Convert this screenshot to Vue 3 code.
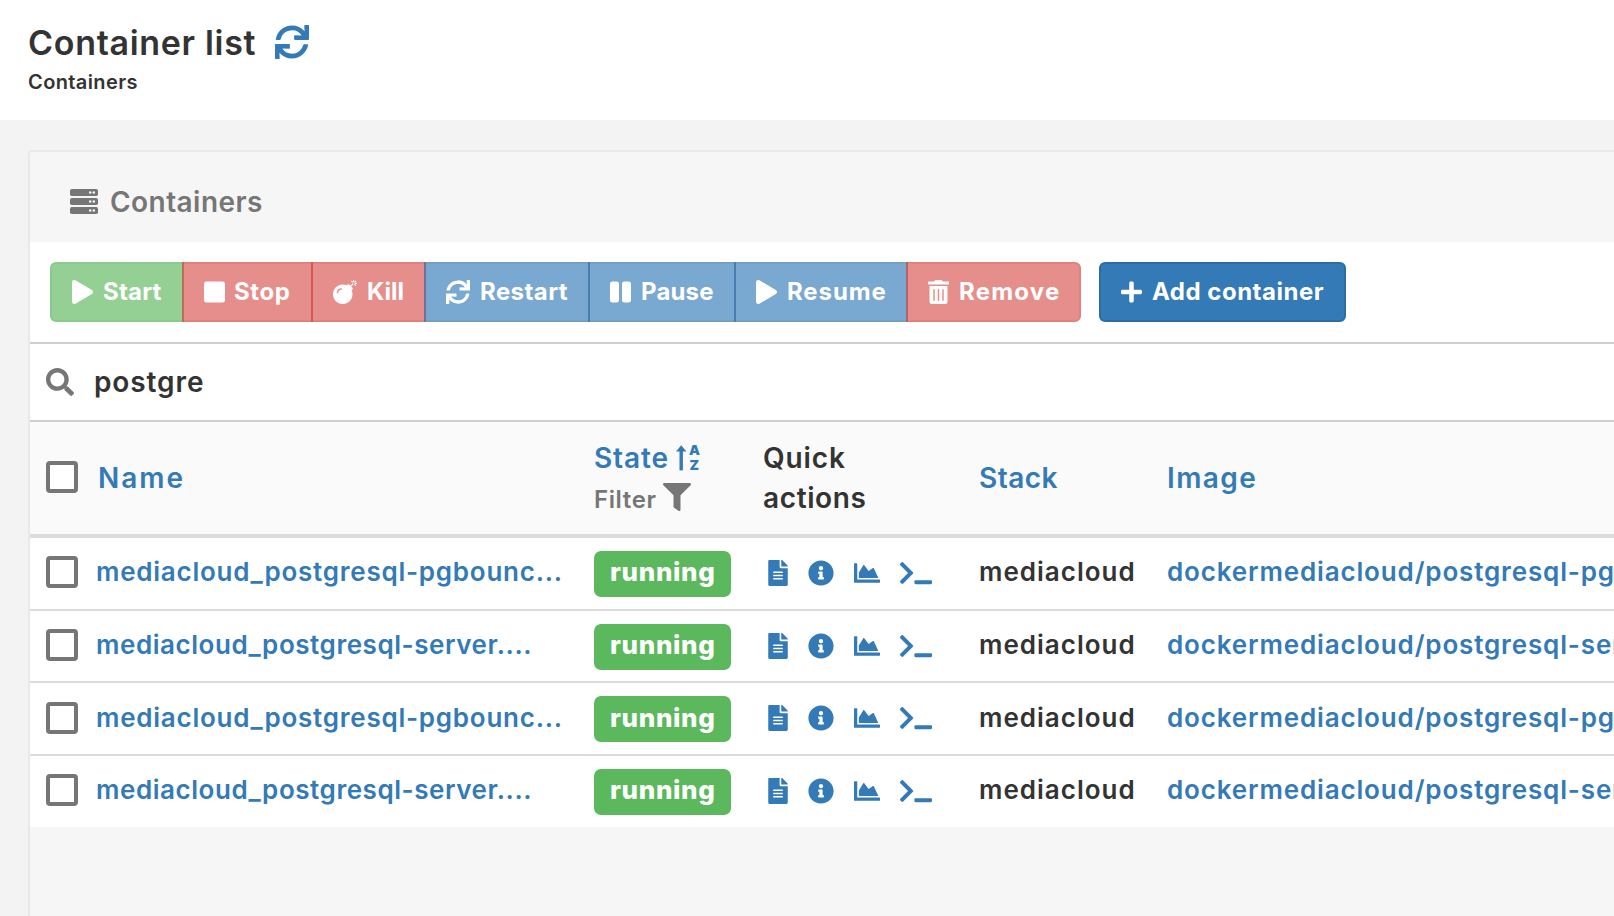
<script setup>
const icons = {
  sync: { box: '0 0 512 512', d: 'M440.65 12.57l4 82.77A247.16 247.16 0 0 0 255.83 8C134.73 8 33.91 94.92 12.29 209.82A12 12 0 0 0 24.09 224h49.05a12 12 0 0 0 11.67-9.26 175.91 175.91 0 0 1 317-56.94l-101.46-4.86a12 12 0 0 0-12.57 12v47.41a12 12 0 0 0 12 12H500a12 12 0 0 0 12-12V12a12 12 0 0 0-12-12h-47.37a12 12 0 0 0-11.98 12.57zM255.83 432a175.61 175.61 0 0 1-146-77.8l101.8 4.87a12 12 0 0 0 12.57-12v-47.4a12 12 0 0 0-12-12H12a12 12 0 0 0-12 12V500a12 12 0 0 0 12 12h47.35a12 12 0 0 0 12-12.6l-4.15-82.57A247.17 247.17 0 0 0 255.83 504c121.11 0 221.93-86.92 243.55-201.82a12 12 0 0 0-11.8-14.18h-49.05a12 12 0 0 0-11.67 9.26A175.86 175.86 0 0 1 255.83 432z' },
  play: { box: '0 0 448 512', d: 'M424.4 214.7L72.4 6.6C43.8-10.3 0 6.1 0 47.9V464c0 37.5 40.7 60.1 72.4 41.3l352-208c31.4-18.5 31.5-64.1 0-82.6z' },
  stop: { box: '0 0 448 512', d: 'M400 32H48C21.5 32 0 53.5 0 80v352c0 26.5 21.5 48 48 48h352c26.5 0 48-21.5 48-48V80c0-26.5-21.5-48-48-48z' },
  bomb: { box: '0 0 512 512', d: 'M440.5 88.5l-52 52L415 167c9.4 9.4 9.4 24.6 0 33.9l-17.4 17.4c11.8 26.1 18.4 55.1 18.4 85.6 0 114.9-93.1 208-208 208S0 418.9 0 304 93.1 96 208 96c30.5 0 59.5 6.6 85.6 18.4L311 97c9.4-9.4 24.6-9.4 33.9 0l26.5 26.5 52-52 17.1 17zM500 60h-24c-6.6 0-12 5.4-12 12s5.4 12 12 12h24c6.6 0 12-5.4 12-12s-5.4-12-12-12zM440 0c-6.6 0-12 5.4-12 12v24c0 6.6 5.4 12 12 12s12-5.4 12-12V12c0-6.6-5.4-12-12-12zm33.9 55l17-17c4.7-4.7 4.7-12.3 0-17-4.7-4.7-12.3-4.7-17 0l-17 17c-4.7 4.7-4.7 12.3 0 17 4.8 4.7 12.4 4.7 17 0zm-67.8 0c4.7 4.7 12.3 4.7 17 0 4.7-4.7 4.7-12.3 0-17l-17-17c-4.7-4.7-12.3-4.7-17 0-4.7 4.7-4.7 12.3 0 17l17 17zm67.8 34c-4.7-4.7-12.3-4.7-17 0-4.7 4.7-4.7 12.3 0 17l17 17c4.7 4.7 12.3 4.7 17 0 4.7-4.7 4.7-12.3 0-17l-17-17zM112 272c0-35.3 28.7-64 64-64 8.8 0 16-7.2 16-16s-7.2-16-16-16c-52.9 0-96 43.1-96 96 0 8.8 7.2 16 16 16s16-7.2 16-16z' },
  pause: { box: '0 0 448 512', d: 'M144 479H48c-26.5 0-48-21.5-48-48V79c0-26.5 21.5-48 48-48h96c26.5 0 48 21.5 48 48v352c0 26.5-21.5 48-48 48zm304-48V79c0-26.5-21.5-48-48-48h-96c-26.5 0-48 21.5-48 48v352c0 26.5 21.5 48 48 48h96c26.5 0 48-21.5 48-48z' },
  trash: { box: '0 0 448 512', d: 'M32 464a48 48 0 0 0 48 48h288a48 48 0 0 0 48-48V128H32zm272-256a16 16 0 0 1 32 0v224a16 16 0 0 1-32 0zm-96 0a16 16 0 0 1 32 0v224a16 16 0 0 1-32 0zm-96 0a16 16 0 0 1 32 0v224a16 16 0 0 1-32 0zM432 32H312l-9.4-18.7A24 24 0 0 0 281.1 0H166.8a23.72 23.72 0 0 0-21.4 13.3L136 32H16A16 16 0 0 0 0 48v32a16 16 0 0 0 16 16h416a16 16 0 0 0 16-16V48a16 16 0 0 0-16-16z' },
  plus: { box: '0 0 448 512', d: 'M416 208H272V64c0-17.67-14.33-32-32-32h-32c-17.67 0-32 14.33-32 32v144H32c-17.67 0-32 14.33-32 32v32c0 17.67 14.33 32 32 32h144v144c0 17.67 14.33 32 32 32h32c17.67 0 32-14.33 32-32V304h144c17.67 0 32-14.33 32-32v-32c0-17.67-14.33-32-32-32z' },
}

const actions = [
  { label: 'Start', icon: 'play', tone: 'green', width: 134, track: 0.2 },
  { label: 'Stop', icon: 'stop', tone: 'red', width: 131, track: 0.6 },
  { label: 'Kill', icon: 'bomb', tone: 'red', width: 115, track: 0 },
  { label: 'Restart', icon: 'sync', tone: 'blue', width: 166, track: 0.42 },
  { label: 'Pause', icon: 'pause', tone: 'blue', width: 148, track: 0.15 },
  { label: 'Resume', icon: 'play', tone: 'blue', width: 174, track: 0.9 },
  { label: 'Remove', icon: 'trash', tone: 'red', width: 175, track: 1.2 },
]

const rows = [
  { name: 'mediacloud_postgresql-pgbounc...', track: 0.76, image: 'dockermediacloud/postgresql-pgbouncer', height: 71 },
  { name: 'mediacloud_postgresql-server....', track: 0.55, image: 'dockermediacloud/postgresql-server', height: 72 },
  { name: 'mediacloud_postgresql-pgbounc...', track: 0.76, image: 'dockermediacloud/postgresql-pgbouncer', height: 73 },
  { name: 'mediacloud_postgresql-server....', track: 0.55, image: 'dockermediacloud/postgresql-server', height: 73 },
]
</script>

<template>
  <div class="page">
    <header class="page-head">
      <div class="title-line">
        <h1 class="title">Container list</h1>
        <svg class="refresh" :viewBox="icons.sync.box"><path :d="icons.sync.d" /></svg>
      </div>
      <div class="crumb">Containers</div>
    </header>

    <main class="panel">
      <div class="panel-head">
        <svg class="server" viewBox="0 0 28 25">
          <g v-for="y in [0, 9, 18]" :key="y">
            <rect x="0" :y="y" width="28" height="7" rx="1.8" fill="#767676" />
            <circle cx="20.2" :cy="y + 3.5" r="1.25" fill="#f6f6f6" />
            <circle cx="23.8" :cy="y + 3.5" r="1.25" fill="#f6f6f6" />
          </g>
        </svg>
        <span class="panel-title">Containers</span>
      </div>

      <div class="toolbar">
        <div class="group">
          <button v-for="a in actions" :key="a.label" class="btn faded" :class="a.tone" :style="{ width: a.width + 'px', letterSpacing: a.track + 'px' }">
            <svg class="btn-icon" :class="a.icon" :viewBox="icons[a.icon].box"><path :d="icons[a.icon].d" /></svg>
            <span class="label">{{ a.label }}</span>
          </button>
        </div>
        <button class="btn blue add">
          <svg class="btn-icon" :viewBox="icons.plus.box"><path :d="icons.plus.d" /></svg>
          <span class="label">Add container</span>
        </button>
      </div>

      <div class="search">
        <svg class="lens" viewBox="0 0 512 512"><path d="M505 442.7L405.3 343c-4.5-4.5-10.6-7-17-7H372c27.6-35.3 44-79.7 44-128C416 93.1 322.9 0 208 0S0 93.1 0 208s93.1 208 208 208c48.3 0 92.7-16.4 128-44v16.3c0 6.4 2.5 12.5 7 17l99.7 99.7c9.4 9.4 24.6 9.4 33.9 0l28.3-28.3c9.4-9.4 9.4-24.6.1-34zM208 336c-70.7 0-128-57.2-128-128 0-70.7 57.2-128 128-128 70.7 0 128 57.2 128 128 0 70.7-57.2 128-128 128z" /></svg>
        <span>postgre</span>
      </div>

      <div class="grid head">
        <i class="check"></i>
        <span class="link h-name">Name</span>
        <div>
          <div class="line link"><span class="h-state">State</span>
            <svg class="sort" viewBox="0 0 24 26">
              <path d="M5.2 25.4V4.5" fill="none" stroke="#337ab7" stroke-width="3.4" />
              <path d="M0 6.4L5.2 .2l5.2 6.2z" />
              <text x="13" y="10.4" font-size="13.8" font-weight="900">A</text>
              <text x="13.4" y="25.4" font-size="13.8" font-weight="900">Z</text>
            </svg>
          </div>
          <div class="line filter"><span class="h-filter">Filter</span>
            <svg class="funnel" viewBox="0 0 512 512"><path d="M487.976 0H24.028C2.71 0-8.047 25.866 7.058 40.971L192 225.941V432c0 7.831 3.821 15.17 10.237 19.662l80 55.98C298.02 518.69 320 507.493 320 487.98V225.941l184.947-184.97C520.021 25.896 509.338 0 487.976 0z" /></svg>
          </div>
        </div>
        <div><div class="line h-quick">Quick</div><div class="line h-actions">actions</div></div>
        <span class="link h-stack">Stack</span>
        <span class="link h-image">Image</span>
      </div>

      <div v-for="(r, i) in rows" :key="i" class="grid row" :style="{ height: r.height + 'px' }">
        <i class="check"></i>
        <span class="link cell" :style="{ letterSpacing: r.track + 'px' }">{{ r.name }}</span>
        <div class="badge"><span>running</span></div>
        <div class="quick">
          <svg class="q-file" viewBox="0 0 384 512"><path d="M224 136V0H24C10.7 0 0 10.7 0 24v464c0 13.3 10.7 24 24 24h336c13.3 0 24-10.7 24-24V160H248c-13.2 0-24-10.8-24-24zm64 236c0 6.6-5.4 12-12 12H108c-6.6 0-12-5.4-12-12v-8c0-6.6 5.4-12 12-12h168c6.6 0 12 5.4 12 12v8zm0-64c0 6.6-5.4 12-12 12H108c-6.6 0-12-5.4-12-12v-8c0-6.6 5.4-12 12-12h168c6.6 0 12 5.4 12 12v8zm0-72v8c0 6.6-5.4 12-12 12H108c-6.6 0-12-5.4-12-12v-8c0-6.6 5.4-12 12-12h168c6.6 0 12 5.4 12 12zm96-114.1v6.1H256V0h6.1c6.4 0 12.5 2.5 17 7l97.9 98c4.5 4.5 7 10.6 7 16.9z" /></svg>
          <svg class="q-info" viewBox="0 0 512 512"><path d="M256 8C119.043 8 8 119.083 8 256c0 136.997 111.043 248 248 248s248-111.003 248-248C504 119.083 392.957 8 256 8zm0 110c23.196 0 42 18.804 42 42s-18.804 42-42 42-42-18.804-42-42 18.804-42 42-42zm56 254c0 6.627-5.373 12-12 12h-88c-6.627 0-12-5.373-12-12v-24c0-6.627 5.373-12 12-12h12v-64h-12c-6.627 0-12-5.373-12-12v-24c0-6.627 5.373-12 12-12h64c6.627 0 12 5.373 12 12v100h12c6.627 0 12 5.373 12 12v24z" /></svg>
          <svg class="q-chart" viewBox="0 0 512 512"><path d="M500 384c6.6 0 12 5.4 12 12v40c0 6.6-5.4 12-12 12H12c-6.6 0-12-5.4-12-12V76c0-6.6 5.4-12 12-12h40c6.6 0 12 5.4 12 12v308h436zM372.7 159.5L288 216l-85.3-113.7c-5.1-6.8-15.5-6.3-19.9 1L96 248v104h384l-89.9-187.8c-3.2-6.5-11.4-8.7-17.4-4.7z" /></svg>
          <svg class="q-term" viewBox="0 0 640 512"><path d="M257.981 272.971L63.638 467.314c-9.373 9.373-24.569 9.373-33.941 0L7.029 444.647c-9.357-9.357-9.375-24.522-.04-33.901L161.011 256 6.99 101.255c-9.335-9.379-9.317-24.544.04-33.901l22.667-22.667c9.373-9.373 24.569-9.373 33.941 0L257.981 239.03c9.373 9.372 9.373 24.568 0 33.941zM640 456v-32c0-13.255-10.745-24-24-24H312c-13.255 0-24 10.745-24 24v32c0 13.255 10.745 24 24 24h304c13.255 0 24-10.745 24-24z" /></svg>
        </div>
        <span class="cell stack">mediacloud</span>
        <span class="link cell image">{{ r.image }}</span>
      </div>
    </main>
  </div>
</template>

<style>
body { margin: 0; }
</style>

<style scoped>
.page { width: 1614px; height: 916px; overflow: hidden; display: flex; flex-direction: column; background: #f3f3f3; color: #333; font-family: Inter, "Noto Sans", sans-serif; font-weight: 600; }
.page * { box-sizing: border-box; }
.page-head { height: 120px; flex: none; background: #fff; padding: 22px 0 0 28px; }
.title-line { display: flex; gap: 20px; height: 40px; }
.title { margin: 0; padding-top: 1px; font-size: 34px; line-height: 40px; font-weight: 600; width: 227px; white-space: nowrap; letter-spacing: 0.69px; }
.refresh { width: 34px; height: 34px; margin-top: 3px; fill: #337ab7; }
.crumb { font-size: 20px; line-height: 24px; margin-top: 8px; letter-spacing: 0.39px; }
.panel { margin: 30px 0 0 28px; flex: 1; border: 2px solid #e9e9e9; border-right: 0; border-bottom: 0; border-radius: 4px 0 0 0; background: #f6f6f6; }
.panel-head { height: 90px; display: flex; align-items: center; padding: 10px 0 0 40px; color: #767676; font-size: 28px; letter-spacing: 0.44px; }
.server { width: 28px; height: 25px; margin: -1px 12px 0 0; }
.toolbar { height: 100px; background: #fff; display: flex; padding: 20px 0 0 20px; gap: 18px; }
.group { display: flex; }
.btn { height: 60px; border: 2px solid; padding: 0 0 0 20px; display: flex; align-items: center; color: #fff; font: 700 24px Inter, "Noto Sans", sans-serif; white-space: nowrap; }
.btn-icon { width: 21px; height: 24px; margin: -1px 10px 0 0; fill: #fff; flex: none; }
.btn-icon.bomb, .btn-icon.sync { width: 24px; }
.btn-icon.stop { margin-right: 9px; }
.label { margin-top: -2px; }
.faded { opacity: 0.65; }
.group .btn + .btn { margin-left: -2px; }
.group .btn:first-child { border-radius: 6px 0 0 6px; }
.group .btn:last-child { border-radius: 0 6px 6px 0; }
.green { background: #5cb85c; border-color: #4cae4c; }
.red { background: #d9534f; border-color: #d43f3a; }
.blue { background: #337ab7; border-color: #2e6da4; }
.add { width: 247px; border-radius: 6px; letter-spacing: 0.5px; }
.search { height: 80px; border-top: 2px solid #cecece; border-bottom: 2px solid #cecece; background: #fff; display: flex; align-items: center; padding-left: 16px; font-size: 28px; letter-spacing: 0.9px; }
.lens { width: 28px; height: 28px; margin: -1px 20px 0 0; fill: #767676; }
.grid { display: grid; grid-template-columns: 50px 498px 169px 216px 187px 1fr; padding-left: 16px; white-space: nowrap; }
.head { height: 116px; align-items: center; background: #fafafa; border-bottom: 4px solid #dcdcdc; font-size: 28px; }
.row { align-items: start; background: #fff; font-size: 26px; }
.row + .row { border-top: 2px solid #dcdcdc; }
.check { width: 32px; height: 32px; border: 4px solid #767676; border-radius: 4px; background: #fff; }
.head .check { margin-top: -2px; }
.row .check { margin-top: 18px; }
.row:nth-last-child(2) .check { margin-top: 19px; }
.link { color: #337ab7; }
.line { height: 40px; display: flex; align-items: center; }
.h-name { padding-left: 2px; letter-spacing: 2px; }
.h-state { letter-spacing: 0.87px; }
.h-filter { letter-spacing: 0.6px; margin-top: 2px; }
.h-quick { letter-spacing: 0.9px; }
.h-actions { letter-spacing: 0.63px; }
.h-stack { letter-spacing: 0.45px; }
.h-image { padding-left: 1px; letter-spacing: 1.4px; }
.sort { width: 24px; height: 26px; margin-left: 7px; fill: #337ab7; overflow: visible; }
.filter { color: #767676; font-size: 24px; }
.funnel { width: 28px; height: 28px; margin: -2px 0 0 6px; fill: #767676; }
.cell { line-height: 40px; margin-top: 14px; }
.row:nth-last-child(2) .cell { margin-top: 15px; }
.stack { letter-spacing: 1px; }
.image { padding-left: 1px; letter-spacing: 0.85px; }
.badge { width: 137px; height: 46px; margin-top: 13px; padding-left: 16px; border-radius: 7px; background: #5cb85c; color: #fff; font-weight: 800; line-height: 42px; letter-spacing: 0.65px; }
.row:nth-last-child(2) .badge { line-height: 44px; }
.quick { display: flex; align-items: center; fill: #337ab7; padding: 22px 0 0 5px; }
.q-file { width: 20px; height: 26px; }
.q-info { width: 26px; height: 26px; margin-left: 20px; }
.q-chart { width: 26px; height: 26px; margin-left: 20px; }
.q-term { width: 32px; height: 26px; margin-left: 20px; }
</style>
